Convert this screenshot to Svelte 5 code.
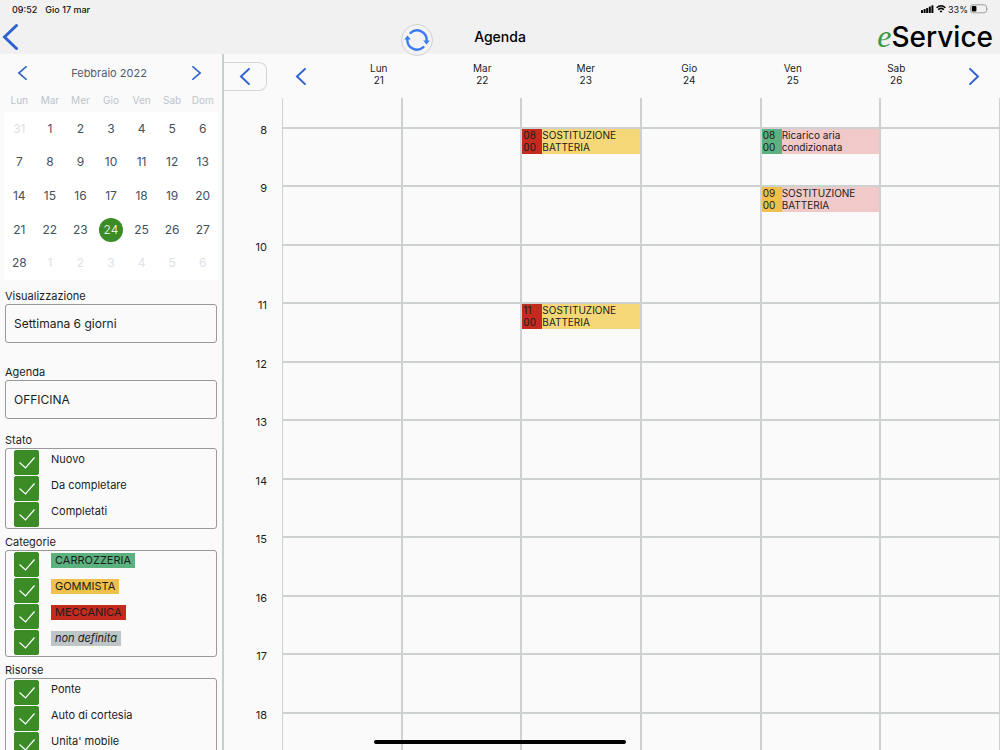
<script>
    const weekdays = ['Lun', 'Mar', 'Mer', 'Gio', 'Ven', 'Sab', 'Dom'];

    // 31 gen, then february, then the first days of march
    const dates = [
        { day: 31, other: true },
        ...Array.from({ length: 28 }, (_, i) => ({ day: i + 1, other: false })),
        ...Array.from({ length: 6 }, (_, i) => ({ day: i + 1, other: true }))
    ];

    const hours = [8, 9, 10, 11, 12, 13, 14, 15, 16, 17, 18];

    const days = [
        { name: 'Lun', number: 21, events: [] },
        { name: 'Mar', number: 22, events: [] },
        { name: 'Mer', number: 23, events: [
            { hour: 8, time: ['08', '00'], title: 'SOSTITUZIONE BATTERIA', category: 'meccanica', tone: 'yellow' },
            { hour: 11, time: ['11', '00'], title: 'SOSTITUZIONE BATTERIA', category: 'meccanica', tone: 'yellow' }
        ] },
        { name: 'Gio', number: 24, events: [] },
        { name: 'Ven', number: 25, events: [
            { hour: 8, time: ['08', '00'], title: 'Ricarico aria condizionata', category: 'carrozzeria', tone: 'pink' },
            { hour: 9, time: ['09', '00'], title: 'SOSTITUZIONE BATTERIA', category: 'gommista', tone: 'pink' }
        ] },
        { name: 'Sab', number: 26, events: [] }
    ];

    let selected = $state(24);
    let view = $state('Settimana 6 giorni');
    let agenda = $state('OFFICINA');
    let sidebarOpen = $state(true);

    let filters = $state([
        { title: 'Stato', items: [
            { label: 'Nuovo', checked: true },
            { label: 'Da completare', checked: true },
            { label: 'Completati', checked: true }
        ] },
        { title: 'Categorie', items: [
            { label: 'CARROZZERIA', tag: 'carrozzeria', checked: true },
            { label: 'GOMMISTA', tag: 'gommista', checked: true },
            { label: 'MECCANICA', tag: 'meccanica', checked: true },
            { label: 'non definita', tag: 'undefined-tag', checked: true }
        ] },
        { title: 'Risorse', items: [
            { label: 'Ponte', checked: true },
            { label: 'Auto di cortesia', checked: true },
            { label: "Unita' mobile", checked: true }
        ] }
    ]);
</script>

{#snippet chevron(dir, width, height)}
    <svg class="chevron" {width} {height} viewBox="0 0 10 18" preserveAspectRatio="none" aria-hidden="true">
        <path d={dir === 'left' ? 'M9 1 L1 9 L9 17' : 'M1 1 L9 9 L1 17'} />
    </svg>
{/snippet}

<div class="app">
    <header>
        <div class="status-bar">
            <span>09:52</span>
            <span>Gio 17 mar</span>
            <div class="status-icons">
                <svg width="13" height="8" viewBox="0 0 13 8" aria-hidden="true">
                    <rect x="0" y="5" width="2" height="3" rx="0.5" />
                    <rect x="2.6" y="4" width="2" height="4" rx="0.5" />
                    <rect x="5.2" y="3" width="2" height="5" rx="0.5" />
                    <rect x="7.8" y="1.6" width="2" height="6.4" rx="0.5" />
                    <rect x="10.4" y="0.2" width="2" height="7.8" rx="0.5" />
                </svg>
                <svg class="wifi" width="10" height="8" viewBox="0 0 10 8" aria-hidden="true">
                    <path d="M0.6 2.8 Q5 -1.2 9.4 2.8" />
                    <path d="M2.2 4.6 Q5 2.2 7.8 4.6" />
                    <path class="dot" d="M3.5 6.1 Q5 4.9 6.5 6.1 L5 7.8 Z" />
                </svg>
                <span class="percent">33%</span>
                <svg class="battery" width="19" height="10" viewBox="0 0 19 10" aria-hidden="true">
                    <rect class="shell" x="0.5" y="0.8" width="16" height="8" rx="2.4" />
                    <rect x="1.8" y="2.1" width="4.6" height="5.4" rx="1" />
                    <path class="tip" d="M17.4 3.4 Q19 4.8 17.4 6.2 Z" />
                </svg>
            </div>
        </div>

        <div class="nav-bar">
            <div class="nav-left">
                <button class="back" aria-label="Indietro">{@render chevron('left', 15, 26)}</button>
                <button class="refresh" aria-label="Aggiorna">
                    <svg width="26" height="24" viewBox="0 0 26 24" aria-hidden="true">
                        <path d="M6.6 4.9 A9.6 9.6 0 0 1 22.6 12.6" />
                        <path d="M19.4 19.1 A9.6 9.6 0 0 1 3.4 11.4" />
                        <path class="head" d="M19.2 12.6 H25.8 L22.5 16.6 Z" />
                        <path class="head" d="M0.2 11.4 H6.8 L3.5 7.4 Z" />
                    </svg>
                </button>
            </div>
            <h1>Agenda</h1>
            <div class="logo"><span>e</span>Service</div>
        </div>
    </header>

    <div class="body">
        {#if sidebarOpen}
        <aside>
            <div class="month">
                <button aria-label="Mese precedente">{@render chevron('left', 9, 14)}</button>
                <span>Febbraio 2022</span>
                <button aria-label="Mese successivo">{@render chevron('right', 9, 14)}</button>
            </div>

            <div class="weekdays">
                {#each weekdays as name}
                    <span>{name}</span>
                {/each}
            </div>

            <div class="dates">
                {#each dates as date}
                    <button
                        class:other={date.other}
                        class:selected={!date.other && date.day === selected}
                        onclick={() => (selected = date.day)}
                    ><span>{date.day}</span></button>
                {/each}
            </div>

            <div class="field">
                <label for="view">Visualizzazione</label>
                <select id="view" bind:value={view}>
                    <option>Settimana 6 giorni</option>
                </select>
            </div>

            <div class="field">
                <label for="agenda">Agenda</label>
                <select id="agenda" bind:value={agenda}>
                    <option>OFFICINA</option>
                </select>
            </div>

            <div class="filters">
                {#each filters as group}
                    <fieldset>
                        <legend>{group.title}</legend>
                        <div class="box">
                            {#each group.items as item}
                                <label class="check">
                                    <input type="checkbox" bind:checked={item.checked} />
                                    <svg viewBox="0 0 25 25" aria-hidden="true">
                                        <path d="M5.5 12.5 L11.5 18 L20.5 7.5" />
                                    </svg>
                                    <span class="text"><span class={item.tag ? `tag ${item.tag}` : ''}>{item.label}</span></span>
                                </label>
                            {/each}
                        </div>
                    </fieldset>
                {/each}
            </div>
        </aside>
        {/if}

        <main>
            <div class="week-header">
                <button class="toggle" aria-label="Mostra o nascondi filtri" onclick={() => (sidebarOpen = !sidebarOpen)}>
                    {@render chevron('left', 10, 17)}
                </button>
                <button class="week-nav" aria-label="Settimana precedente">{@render chevron('left', 10, 17)}</button>
                <div class="day-names">
                    {#each days as day}
                        <div>{day.name}<br />{day.number}</div>
                    {/each}
                </div>
                <button class="week-nav" aria-label="Settimana successiva">{@render chevron('right', 10, 17)}</button>
            </div>

            <div class="schedule">
                <div class="hours">
                    {#each hours as hour}
                        <div class="hour">{hour}</div>
                    {/each}
                </div>
                {#each days as day}
                    <div class="column">
                        {#each hours as hour}
                            <div class="slot">
                                {#each day.events.filter((e) => e.hour === hour) as event}
                                    <div class="event {event.tone}">
                                        <div class="time {event.category}">{event.time[0]}<br />{event.time[1]}</div>
                                        <div class="title">{event.title}</div>
                                    </div>
                                {/each}
                            </div>
                        {/each}
                    </div>
                {/each}
            </div>
        </main>
    </div>

    <div class="home-indicator"></div>
</div>

<style>
    :global(body) {
        margin: 0;
        background: #fafafa;
    }

    .app {
        display: flex;
        flex-direction: column;
        height: 100vh;
        overflow: hidden;
        background: #fafafa;
        color: #1c1c1c;
        font-family: Inter, "Liberation Sans", sans-serif;
        font-size: 11px;
    }

    .app * {
        box-sizing: border-box;
    }

    button {
        display: flex;
        align-items: center;
        justify-content: center;
        padding: 0;
        border: none;
        background: none;
        color: inherit;
        font: inherit;
        cursor: pointer;
    }

    .chevron {
        fill: none;
        stroke: #2f62d0;
        stroke-width: 2;
        stroke-linecap: round;
        overflow: visible;
    }

    /* header */
    header {
        flex: none;
        background: #f1f1f1;
    }

    .status-bar {
        display: flex;
        align-items: center;
        gap: 8px;
        height: 18px;
        padding: 0 11px 0 12px;
        color: #111;
        font-size: 9px;
        font-weight: 500;
    }

    .status-icons {
        display: flex;
        align-items: center;
        gap: 2px;
        margin-left: auto;
    }

    .percent {
        font-weight: 400;
    }

    .wifi path {
        fill: none;
        stroke: #000;
        stroke-width: 1.5;
    }

    .wifi .dot {
        fill: #000;
        stroke: none;
    }

    .battery .shell {
        fill: none;
        stroke: #a0a0a0;
    }

    .battery .tip {
        fill: #a0a0a0;
    }

    .nav-bar {
        display: grid;
        grid-template-columns: 1fr auto 1fr;
        align-items: start;
        height: 36px;
        padding: 0 7px;
    }

    .nav-left {
        display: flex;
        align-items: center;
        justify-content: space-between;
        height: 38px;
        margin-left: -4px;
        padding-right: 41px;
    }

    .refresh {
        width: 32px;
        height: 32px;
        margin-top: 5px;
        border: 1px solid #d0d3d3;
        border-radius: 50%;
        background: #f3f3f3;
    }

    .refresh svg {
        flex: none;
        fill: none;
        stroke: #3b7bf6;
        stroke-width: 2.4;
        stroke-linecap: round;
    }

    .refresh .head {
        fill: #3b7bf6;
        stroke: none;
    }

    h1 {
        margin: 0;
        color: #000;
        font-size: 14px;
        font-weight: 500;
        line-height: 38px;
    }

    .logo {
        justify-self: end;
        color: #000;
        font-size: 28px;
        font-weight: 500;
        line-height: 36px;
        white-space: nowrap;
    }

    .logo span {
        color: #3c9a3c;
        font-family: "Liberation Serif", serif;
        font-size: 32px;
        font-style: italic;
        font-weight: 400;
    }

    .body {
        display: flex;
        flex: 1;
        min-height: 0;
    }

    /* sidebar */
    aside {
        flex: none;
        width: 224px;
        padding: 0 5px;
        border-right: 2px solid #c9cfce;
        overflow: hidden;
    }

    .month {
        display: flex;
        align-items: center;
        justify-content: space-between;
        height: 38px;
        padding: 0 11px 0 7px;
        color: #4f5d6a;
        font-size: 11px;
    }

    .month button {
        width: 20px;
        height: 24px;
    }

    .weekdays,
    .dates {
        display: grid;
        grid-template-columns: repeat(7, 1fr);
        margin: 0 -1px;
        text-align: center;
    }

    .weekdays {
        height: 20px;
        color: #bcc4cc;
        font-size: 10px;
        line-height: 17px;
    }

    .dates {
        height: 168px;
        grid-template-rows: repeat(5, 1fr);
        background: #fff;
        color: #43515c;
        font-size: 12px;
    }

    .dates span {
        width: 24px;
        height: 24px;
        border-radius: 50%;
        line-height: 24px;
    }

    .dates .other {
        color: #dde2e7;
    }

    .dates .selected span {
        background: #3b8c26;
        color: #fff;
        font-weight: 300;
    }

    .field {
        display: flex;
        flex-direction: column;
        margin-top: 8px;
        line-height: 16px;
    }

    .field + .field {
        margin-top: 21px;
    }

    select {
        appearance: none;
        width: 100%;
        height: 39px;
        padding: 0 8px;
        border: 1px solid #999;
        border-radius: 3px;
        background: #fafafa;
        color: #1c1c1c;
        font-family: inherit;
        font-size: 12px;
    }

    .filters {
        display: flex;
        flex-direction: column;
        gap: 5px;
        margin-top: 13px;
    }

    fieldset {
        min-width: 0;
        margin: 0;
        padding: 0;
        border: none;
    }

    legend {
        padding: 0;
        line-height: 16px;
    }

    .box {
        padding: 1px 8px 0;
        border: 1px solid #999;
        border-radius: 3px;
    }

    .check {
        display: grid;
        grid-template-columns: 25px 1fr;
        column-gap: 12px;
        height: 26px;
    }

    .check input {
        grid-area: 1 / 1;
        appearance: none;
        width: 25px;
        height: 25px;
        margin: 0;
        border: 1px solid #3b8c26;
        border-radius: 2px;
    }

    .check input:checked {
        background: #3b8c26;
    }

    .check svg {
        grid-area: 1 / 1;
        width: 25px;
        height: 25px;
        fill: none;
        stroke: #fff;
        stroke-width: 1.2;
        pointer-events: none;
    }

    .text {
        line-height: 19px;
    }

    .tag {
        display: inline-block;
        margin-top: 1px;
        padding: 0 4px;
        line-height: 15px;
        vertical-align: top;
    }

    .carrozzeria {
        background: #5bb27f;
    }

    .gommista {
        background: #efc04c;
    }

    .meccanica {
        background: #c42b1f;
    }

    .undefined-tag {
        background: #bfc5c6;
        font-style: italic;
    }

    /* week */
    main {
        display: flex;
        flex: 1;
        flex-direction: column;
        min-width: 0;
    }

    .week-header {
        display: flex;
        flex: none;
        align-items: center;
        height: 44px;
    }

    .toggle {
        width: 43px;
        height: 29px;
        margin-right: 8px;
        border: 1px solid #d3d6d6;
        border-left: none;
        border-radius: 0 8px 8px 0;
    }

    .week-nav {
        width: 52px;
        height: 29px;
    }

    .day-names {
        display: grid;
        flex: 1;
        grid-template-columns: repeat(6, 1fr);
        padding-bottom: 4px;
        font-size: 10px;
        line-height: 12px;
        text-align: center;
    }

    .schedule {
        display: flex;
        flex: 1;
        min-height: 0;
        overflow: hidden;
    }

    .hours {
        flex: none;
        width: 59px;
        padding-top: 24px;
        padding-right: 15px;
        border-right: 1px solid #cdd1d1;
        line-height: 16px;
        text-align: right;
    }

    .column {
        flex: 1;
        min-width: 0;
        padding-top: 29px;
        border-right: 2px solid #cdd1d1;
    }

    .column:last-child {
        border-right-width: 1px;
    }

    .hour,
    .slot {
        height: 58px;
    }

    .hour:nth-child(even),
    .slot:nth-child(even) {
        height: 59px;
    }

    .slot {
        border-top: 2px solid #cdd1d1;
    }

    .event {
        display: flex;
        height: 25px;
        font-size: 10px;
        line-height: 12px;
    }

    .time {
        flex: none;
        width: 20px;
        padding-left: 1px;
    }

    .yellow {
        background: #f4d877;
    }

    .pink {
        background: #f2c9c9;
    }

    .home-indicator {
        position: fixed;
        bottom: 6px;
        left: 50%;
        width: 252px;
        height: 4px;
        margin-left: -126px;
        border-radius: 2px;
        background: #000;
    }
</style>
